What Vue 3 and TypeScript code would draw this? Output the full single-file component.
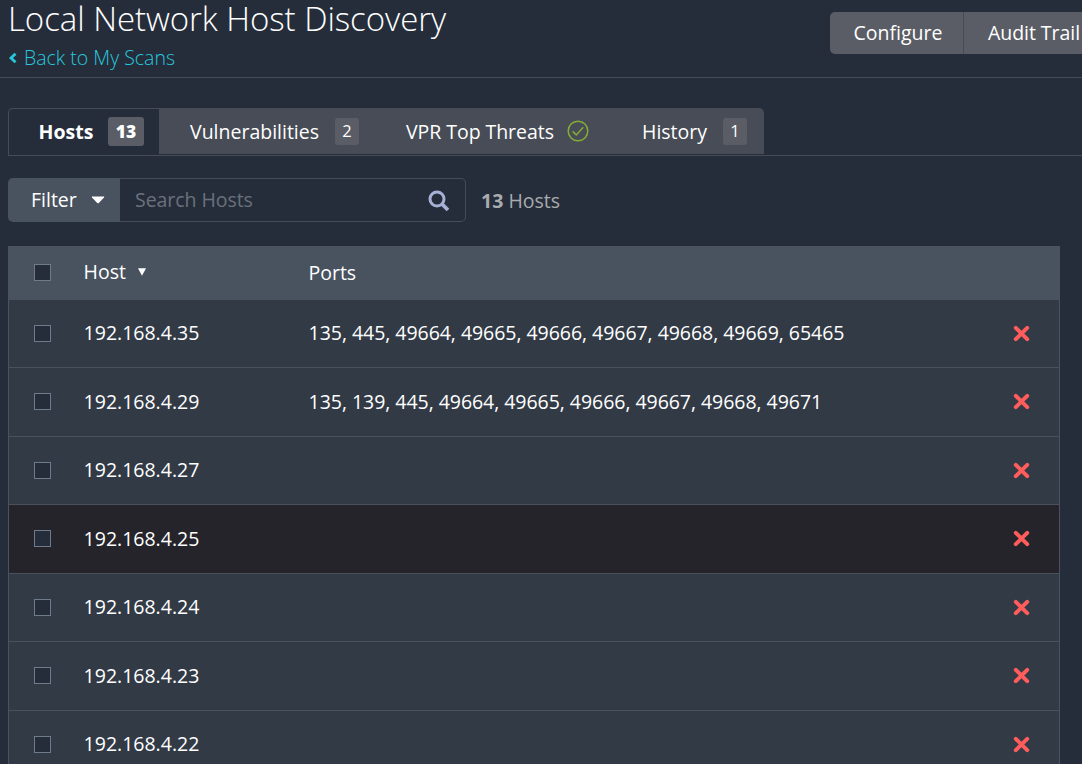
<script setup lang="ts">
interface Host {
  ip: string
  ports: string
  active?: boolean
}

const hosts: Host[] = [
  { ip: '192.168.4.35', ports: '135, 445, 49664, 49665, 49666, 49667, 49668, 49669, 65465' },
  { ip: '192.168.4.29', ports: '135, 139, 445, 49664, 49665, 49666, 49667, 49668, 49671' },
  { ip: '192.168.4.27', ports: '' },
  { ip: '192.168.4.25', ports: '', active: true },
  { ip: '192.168.4.24', ports: '' },
  { ip: '192.168.4.23', ports: '' },
  { ip: '192.168.4.22', ports: '' },
]
</script>

<template>
  <div class="page">
    <header class="head">
      <div class="heading">
        <h1>Local Network Host Discovery</h1>
        <a class="back">
          <svg width="9" height="12" viewBox="0 0 9 12"><path d="M7.5 1.8L3 6L7.5 10.2" fill="none" stroke="#28c8dc" stroke-width="2.8" /></svg>
          <span>Back to My Scans</span>
        </a>
      </div>
      <div class="actions">
        <button class="configure">Configure</button>
        <button class="audit">Audit Trail</button>
      </div>
    </header>

    <nav class="tabs">
      <div class="tab hosts"><span>Hosts</span><b class="badge">13</b></div>
      <div class="rest">
        <div class="tab vuln"><span>Vulnerabilities</span><i class="badge">2</i></div>
        <div class="tab vpr">
          <span>VPR Top Threats</span>
          <svg width="22" height="22" viewBox="0 0 22 22" fill="none" stroke="#85ac36" stroke-width="1.5">
            <circle cx="11" cy="11" r="9.8" />
            <path d="M5.6 11.4L9.3 14.9L16.2 7.2" />
          </svg>
        </div>
        <div class="tab history"><span>History</span><i class="badge">1</i></div>
      </div>
    </nav>

    <div class="tools">
      <div class="filter">
        <span>Filter</span>
        <svg width="14" height="8" viewBox="0 0 14 8"><path d="M1 .6H13Q13.6 .8 13 1.5L7.8 7Q7 7.7 6.2 7L1 1.5Q.4 .8 1 .6Z" fill="#fff" /></svg>
      </div>
      <div class="search">
        <span>Search Hosts</span>
        <svg width="22" height="22" viewBox="0 0 22 22" fill="none" stroke="#a6b1d4"><circle cx="9" cy="9" r="7" stroke-width="3" /><path d="M14 14L20 20" stroke-width="3.8" /></svg>
      </div>
      <div class="count"><b>13</b> Hosts</div>
    </div>

    <div class="table">
      <div class="row header">
        <i class="box"></i>
        <div class="ip">
          <span>Host</span>
          <svg width="8" height="8" viewBox="0 0 8 8"><path d="M0 .3H8L4 7.7Z" fill="#fff" /></svg>
        </div>
        <div class="ports">Ports</div>
      </div>
      <div v-for="h in hosts" :key="h.ip" class="row" :class="{ active: h.active }">
        <i class="box"></i>
        <div class="ip">{{ h.ip }}</div>
        <div class="ports">{{ h.ports }}</div>
        <svg class="remove" width="17" height="17" viewBox="0 0 17 17"><path d="M2.8 2.8L14.2 14.2M14.2 2.8L2.8 14.2" stroke="#ff5c5c" stroke-width="4" stroke-linecap="round" /></svg>
      </div>
    </div>
  </div>
</template>

<style>
body {
  background: #252d3b;
  overflow: hidden;
}
</style>

<style scoped>
* {
  box-sizing: border-box;
}
.page {
  width: 1082px;
  height: 764px;
  overflow: hidden;
  background: #252d3b;
  color: #fff;
  font: 400 19.5px/28px "Open Sans", "Noto Sans", sans-serif;
  white-space: nowrap;
}
svg {
  display: block;
  flex: none;
}
.head {
  display: flex;
  justify-content: space-between;
  height: 78px;
  border-bottom: 1px solid #464d59;
  padding-left: 8px;
}
h1 {
  margin: 0;
  height: 44px;
  font-size: 33px;
  font-weight: 300;
  letter-spacing: -0.05px;
  line-height: 38px;
}
.back {
  display: flex;
  align-items: center;
  gap: 7px;
  height: 28px;
  color: #28c8dc;
  font-weight: 300;
}
.actions {
  display: flex;
  width: 252px;
  height: 42px;
  margin-top: 12px;
  overflow: hidden;
  border-radius: 5px 0 0 5px;
}
button {
  flex: none;
  height: 42px;
  padding: 0;
  border: 0;
  background: #5a5d65;
  color: #fff;
  font: inherit;
}
.configure {
  width: 134px;
  padding-left: 3px;
  border-right: 1px solid #464b57;
}
.audit {
  width: 140px;
  letter-spacing: -0.05px;
}
.tabs {
  display: flex;
  height: 48px;
  margin: 30px 0 0 8px;
  border-bottom: 1px solid #464d59;
}
.tab {
  display: flex;
  align-items: center;
}
.hosts {
  width: 151px;
  padding: 0 0 1px 29.5px;
  border: 1px solid #464d59;
  border-right: 0;
  border-bottom: 0;
  border-radius: 5px 0 0 0;
  font-weight: 700;
}
.rest {
  display: flex;
  width: 605px;
  height: 46px;
  background: #474c56;
  border-radius: 0 5px 0 0;
}
.rest span {
  padding-top: 2px;
}
.badge {
  display: flex;
  align-items: center;
  justify-content: center;
  width: 24px;
  height: 27px;
  background: #5a5d65;
  border-radius: 3px;
  font-size: 16.5px;
  font-style: normal;
}
.hosts .badge {
  width: 36px;
  height: 29px;
  margin-left: 14.6px;
  padding-bottom: 1px;
  font-size: 17.5px;
}
.vuln {
  width: 216px;
  padding-left: 31px;
  gap: 16px;
}
.vpr {
  width: 236px;
  padding-left: 31px;
  gap: 13px;
  letter-spacing: -0.05px;
}
.history {
  padding-left: 31px;
  gap: 16px;
}
.tools {
  display: flex;
  height: 44px;
  margin: 22px 0 0 8px;
}
.filter {
  display: flex;
  align-items: center;
  width: 112px;
  padding-left: 23px;
  gap: 14px;
  background: #495360;
  border-radius: 5px 0 0 5px;
}
.search {
  display: flex;
  align-items: center;
  justify-content: space-between;
  width: 346px;
  padding: 0 15px;
  border: 1px solid #464d59;
  border-left: 0;
  border-radius: 0 5px 5px 0;
  color: #6b717b;
  letter-spacing: -0.05px;
}
.search svg {
  margin-top: 1px;
}
.count {
  padding: 9px 0 0 15px;
  color: #a9abae;
}
.table {
  width: 1052px;
  margin: 24px 0 0 8px;
  border: 1px solid #4a535f;
}
.row {
  display: flex;
  align-items: center;
  height: 69px;
  padding: 0 29px 1px 25px;
  background: #323a46;
  border-bottom: 1px solid #4a515d;
}
.row:nth-child(even) {
  height: 68px;
  padding-bottom: 0;
}
.row:nth-child(even) .ip,
.row:nth-child(even) .ports {
  padding-bottom: 1px;
}
.row.header {
  height: 53px;
  padding-bottom: 2px;
  background: #495360;
  border: 0;
}
.row.active {
  background: #25242a;
}
.box {
  width: 17px;
  height: 17px;
  background: #252d3b;
  border: 1px solid #6d7b8b;
}
.ip {
  display: flex;
  align-items: center;
  width: 225px;
  margin-left: 32.6px;
  gap: 12px;
}
.ports {
  letter-spacing: -0.04px;
}
.header .ip {
  padding-bottom: 2px;
}
.remove {
  margin-left: auto;
}
</style>
